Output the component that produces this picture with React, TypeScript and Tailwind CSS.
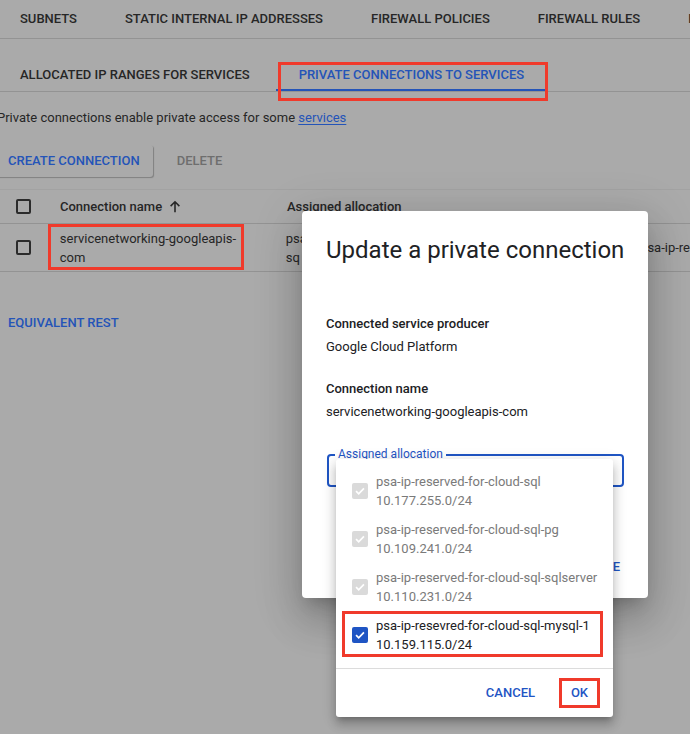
import React from "react";

const RED = "border-[3px] border-[#f03a2b]";

function Check({ disabled = false, on = false }: { disabled?: boolean; on?: boolean }) {
  if (!on) {
    return <span className="block h-[15px] w-[15px] rounded-[2px] border-2 border-[#2b2b2b]" />;
  }
  return (
    <span
      className={`flex h-4 w-4 items-center justify-center rounded-[2px] ${
        disabled ? "bg-[#dadada]" : "bg-[#1f55c4]"
      }`}
    >
      <svg viewBox="0 0 16 16" className="h-3.5 w-3.5" fill="none" stroke="white" strokeWidth="2">
        <path d="M3.5 8.2l3 3L12.5 5" />
      </svg>
    </span>
  );
}

const allocations = [
  { name: "psa-ip-reserved-for-cloud-sql", ip: "10.177.255.0/24", disabled: true },
  { name: "psa-ip-reserved-for-cloud-sql-pg", ip: "10.109.241.0/24", disabled: true },
  { name: "psa-ip-reserved-for-cloud-sql-sqlserver", ip: "10.110.231.0/24", disabled: true },
  { name: "psa-ip-resevred-for-cloud-sql-mysql-1", ip: "10.159.115.0/24", disabled: false },
];

export default function App() {
  return (
    <div className="relative h-[734px] w-[690px] overflow-hidden bg-[#aaaaaa] font-['Roboto',sans-serif] text-[#262626]">
      {/* top tabs */}
      <div className="flex h-[39px] items-center gap-12 whitespace-nowrap border-b border-[#939393] pl-5 text-[13px] font-medium">
        <span>SUBNETS</span>
        <span>STATIC INTERNAL IP ADDRESSES</span>
        <span>FIREWALL POLICIES</span>
        <span>FIREWALL RULES</span>
        <span>ROUTES</span>
      </div>

      {/* sub tabs */}
      <div className="relative flex h-[53px] whitespace-nowrap border-b border-[#939393] text-[13px] font-medium">
        <div className="px-5 pt-[26px]">ALLOCATED IP RANGES FOR SERVICES</div>
        <div className="relative ml-[6px] border-b-2 border-[#2454b8] px-[23px] pt-[26px] text-[#2454b8]">
          PRIVATE CONNECTIONS TO SERVICES
          <div className={`absolute left-[2px] top-[23px] h-[39px] w-[270px] ${RED}`} />
        </div>
      </div>

      {/* description */}
      <p className="-ml-[3px] mt-[16px] text-[13px] leading-5">
        Private connections enable private access for some{" "}
        <span className="text-[#2454b8] underline underline-offset-2">services</span>
      </p>

      {/* actions */}
      <div className="mt-[17px] flex items-center text-[13px] font-medium">
        <div className="-ml-[5px] flex h-[32px] items-center rounded-[3px] px-[13px] text-[#2454b8] shadow-[1px_1px_1px_rgba(0,0,0,0.25)]">
          CREATE CONNECTION
        </div>
        <span className="ml-[24px] text-[#6e6e6e]">DELETE</span>
      </div>

      {/* table */}
      <div className="mt-[12px] border-t border-[#a2a2a2] text-[13px]">
        <div className="flex h-[34px] items-center border-b border-[#939393] font-medium">
          <div className="w-[60px] pl-4">
            <Check />
          </div>
          <div className="flex w-[227px] items-center gap-[6px]">
            Connection name
            <svg viewBox="0 0 16 16" className="h-[14px] w-[14px]" fill="none" stroke="#262626" strokeWidth="1.8">
              <path d="M8 14V2.5M3 7l5-5 5 5" />
            </svg>
          </div>
          <div>Assigned allocation</div>
        </div>
        <div className="flex h-[48px] items-center whitespace-nowrap border-b border-[#939393]">
          <div className="w-[60px] pl-4">
            <Check />
          </div>
          <div className="relative w-[227px] leading-[19px]">
            servicenetworking-googleapis-
            <br />
            com
            <div className={`absolute -left-[12px] -top-[5px] h-[46px] w-[196px] ${RED}`} />
          </div>
          <div className="w-[356px] leading-[19px]">
            psa
            <br />
            sq
          </div>
          <div className="leading-[19px]">psa-ip-re</div>
        </div>
      </div>

      <div className="ml-2 mt-[41px] text-[13px] font-medium text-[#2454b8]">EQUIVALENT REST</div>

      {/* dialog */}
      <div className="absolute left-[302px] top-[211px] flex h-[387px] w-[346px] flex-col rounded-[4px] bg-white px-6 text-[13px] text-[#202124] shadow-[0_11px_15px_-7px_rgba(0,0,0,0.2),0_24px_38px_3px_rgba(0,0,0,0.14),0_9px_46px_8px_rgba(0,0,0,0.12)]">
        <h2 className="mt-[23px] whitespace-nowrap text-[24px] leading-8">Update a private connection</h2>
        <div className="mt-[48px] font-medium leading-5">Connected service producer</div>
        <div className="mt-[3px] leading-5">Google Cloud Platform</div>
        <div className="mt-[22px] font-medium leading-5">Connection name</div>
        <div className="mt-[3px] leading-5">servicenetworking-googleapis-com</div>
        <div className="relative ml-px mt-[32px] h-[33px] w-[297px] rounded-[4px] border-2 border-[#1f55c4]">
          <span className="absolute -top-[10px] left-[6px] bg-white px-[3px] text-[12px] leading-4 text-[#1f55c4]">
            Assigned allocation
          </span>
        </div>
        <div className="mb-[22px] mt-auto flex justify-end pr-[4px] text-[13px] font-medium text-[#1f55c4]">
          <span>UPDATE</span>
        </div>
      </div>

      {/* allocation dropdown */}
      <div className="absolute left-[336px] top-[459px] w-[277px] rounded-[3px] bg-white text-[13px] shadow-[0_5px_5px_-3px_rgba(0,0,0,0.2),0_8px_10px_1px_rgba(0,0,0,0.14),0_3px_14px_2px_rgba(0,0,0,0.12)]">
        <div className="pb-[9px] pt-2">
          {allocations.map((a) => (
            <div key={a.name} className="relative flex h-12 items-center gap-2 pl-4">
              <Check on disabled={a.disabled} />
              <div className={`leading-[19px] ${a.disabled ? "text-[#7a7a7a]" : "text-[#202124]"}`}>
                <div>{a.name}</div>
                <div>{a.ip}</div>
              </div>
              {!a.disabled && <div className={`absolute left-[6px] top-0 h-[46px] w-[261px] ${RED}`} />}
            </div>
          ))}
        </div>
        <div className="flex h-[49px] items-center justify-end border-t border-[#dcdcdc] pr-[13px] text-[13px] font-medium text-[#1f55c4]">
          <span className="mr-[24px]">CANCEL</span>
          <span className={`flex h-[30px] w-[41px] items-center justify-center ${RED}`}>OK</span>
        </div>
      </div>
    </div>
  );
}
